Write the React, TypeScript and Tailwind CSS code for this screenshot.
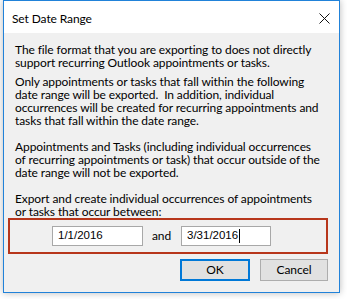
import React from "react";

export default function App() {
  return (
    <div className="w-[347px] h-[299px] bg-white overflow-hidden font-['Lato',sans-serif]">
      <div className="ml-[3px] w-[337px] h-[293px] border border-[#2182d9] bg-[#f0f0f0] flex flex-col shadow-[0_0_7px_rgba(0,0,0,0.28)] text-[12px] tracking-[-0.1px] text-black">
        <div className="h-[32px] bg-white flex items-center justify-between pl-[8px] pr-[9px] shrink-0">
          <span className="leading-[13px] mt-[2px]">Set Date Range</span>
          <svg width="11" height="11" viewBox="0 0 11 11" className="mt-[2px]">
            <path d="M0.5 0.5 L10.5 10.5 M10.5 0.5 L0.5 10.5" stroke="#111" strokeWidth="1" fill="none" />
          </svg>
        </div>
        <div className="flex flex-col pt-[10px]">
          <div className="pl-[11px] leading-[13px] whitespace-nowrap">
            <p>
              The file format that you are exporting to does not directly
              <br />
              support recurring Outlook appointments or tasks.
            </p>
            <p className="mt-[6px]">
              Only appointments or tasks that fall within the following
              <br />
              date range will be exported.&nbsp; In addition, individual
              <br />
              occurrences will be created for recurring appointments and
              <br />
              tasks that fall within the date range.
            </p>
            <p className="mt-[13px]">
              Appointments and Tasks (including individual occurrences
              <br />
              of recurring appointments or task) that occur outside of the
              <br />
              date range will not be exported.
            </p>
            <p className="mt-[13px]">
              Export and create individual occurrences of appointments
              <br />
              or tasks that occur between:
            </p>
          </div>
          <div className="ml-[4px] mr-[11px] h-[36px] border-2 border-[#b7361b] flex items-center pl-[42px]">
            <div className="w-[91px] h-[20px] bg-white border border-[#a8a8a8] flex items-center pl-[5px] text-[11.5px] tracking-normal font-['Liberation_Sans',Arial,sans-serif]">
              1/1/2016
            </div>
            <span className="ml-[9px] mr-[9px] w-[20px]">and</span>
            <div className="w-[90px] h-[20px] bg-white border border-[#a8a8a8] flex items-center pl-[5px] text-[11.5px] tracking-normal font-['Liberation_Sans',Arial,sans-serif]">
              3/31/2016
              <span className="inline-block w-px h-[14px] bg-black ml-px" />
            </div>
          </div>
          <div className="flex justify-end gap-[10px] mt-[5px] mr-[11px]">
            <button className="w-[70px] h-[22px] border-2 border-[#0078d7] bg-[#e1e1e1] flex items-center justify-center leading-none">
              OK
            </button>
            <button className="w-[68px] h-[22px] border border-[#adadad] bg-[#e1e1e1] flex items-center justify-center leading-none">
              Cancel
            </button>
          </div>
        </div>
      </div>
    </div>
  );
}
